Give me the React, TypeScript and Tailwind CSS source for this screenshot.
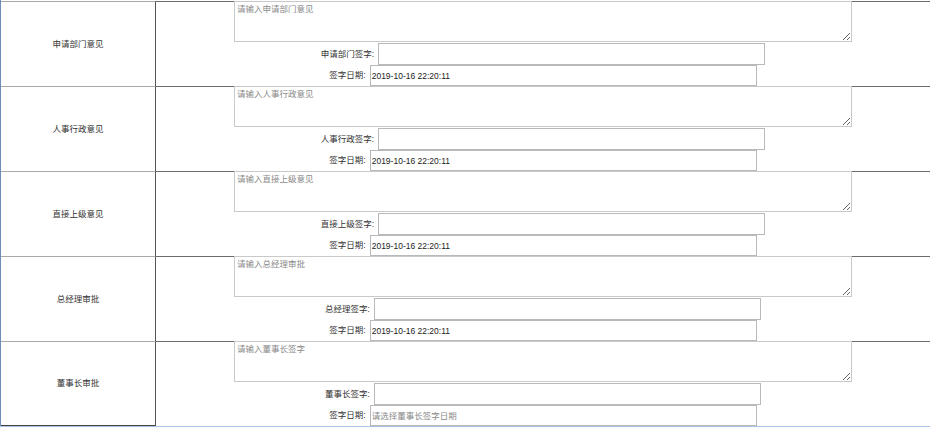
import React from "react";

interface ApprovalRow {
  title: string;
  placeholder: string;
  signLabel: string;
  date: string;
  datePlaceholder?: string;
}

const ROWS: ApprovalRow[] = [
  { title: "申请部门意见", placeholder: "请输入申请部门意见", signLabel: "申请部门签字", date: "2019-10-16 22:20:11" },
  { title: "人事行政意见", placeholder: "请输入人事行政意见", signLabel: "人事行政签字", date: "2019-10-16 22:20:11" },
  { title: "直接上级意见", placeholder: "请输入直接上级意见", signLabel: "直接上级签字", date: "2019-10-16 22:20:11" },
  { title: "总经理审批", placeholder: "请输入总经理审批", signLabel: "总经理签字", date: "2019-10-16 22:20:11" },
  { title: "董事长审批", placeholder: "请输入董事长签字", signLabel: "董事长签字", date: "", datePlaceholder: "请选择董事长签字日期" },
];

const FONT = { fontFamily: '"Liberation Sans", "Noto Sans CJK SC", sans-serif' };

function Row({ row, last }: { row: ApprovalRow; last: boolean }) {
  return (
    <div className="flex h-[85px]">
      <div
        className={
          "w-[155px] shrink-0 flex items-center justify-center border-t border-r border-t-[#a9a9a9] border-r-[#555] text-[#333] " +
          (last ? "border-b border-b-[#444]" : "")
        }
      >
        {row.title}
      </div>
      <div className="flex-1 flex flex-col items-center border-t border-t-[#6b6b6b]">
        <textarea
          placeholder={row.placeholder}
          className="-mt-px w-[618px] h-[41px] shrink-0 border border-[#c9c9c9] bg-white px-[2px] py-[1px] outline-none placeholder:text-[#8a8a8a] text-[#333]"
        />
        <div className="mt-px flex items-center gap-[4px]">
          <span className="text-[#333]">{row.signLabel}:</span>
          <input className="w-[387px] h-[22px] border border-[#b9b9b9] bg-white px-[2px] outline-none text-[#333]" />
        </div>
        <div className="flex items-center gap-[4px]">
          <span className="text-[#333]">签字日期:</span>
          <input
            defaultValue={row.date}
            placeholder={row.datePlaceholder}
            className="w-[387px] h-[21px] border border-[#b9b9b9] bg-white px-[1px] outline-none text-[#222] placeholder:text-[#8a8a8a]"
          />
        </div>
      </div>
    </div>
  );
}

export default function App() {
  return (
    <div className="w-[930px] h-[428px] bg-white overflow-hidden text-[8.5px]" style={FONT}>
      <div className="border-l border-l-[#6f8fb8] pt-px">
        {ROWS.map((r, i) => (
          <Row key={r.title} row={r} last={i === ROWS.length - 1} />
        ))}
      </div>
      <div className="h-px bg-[#a9c4e6]" />
    </div>
  );
}
